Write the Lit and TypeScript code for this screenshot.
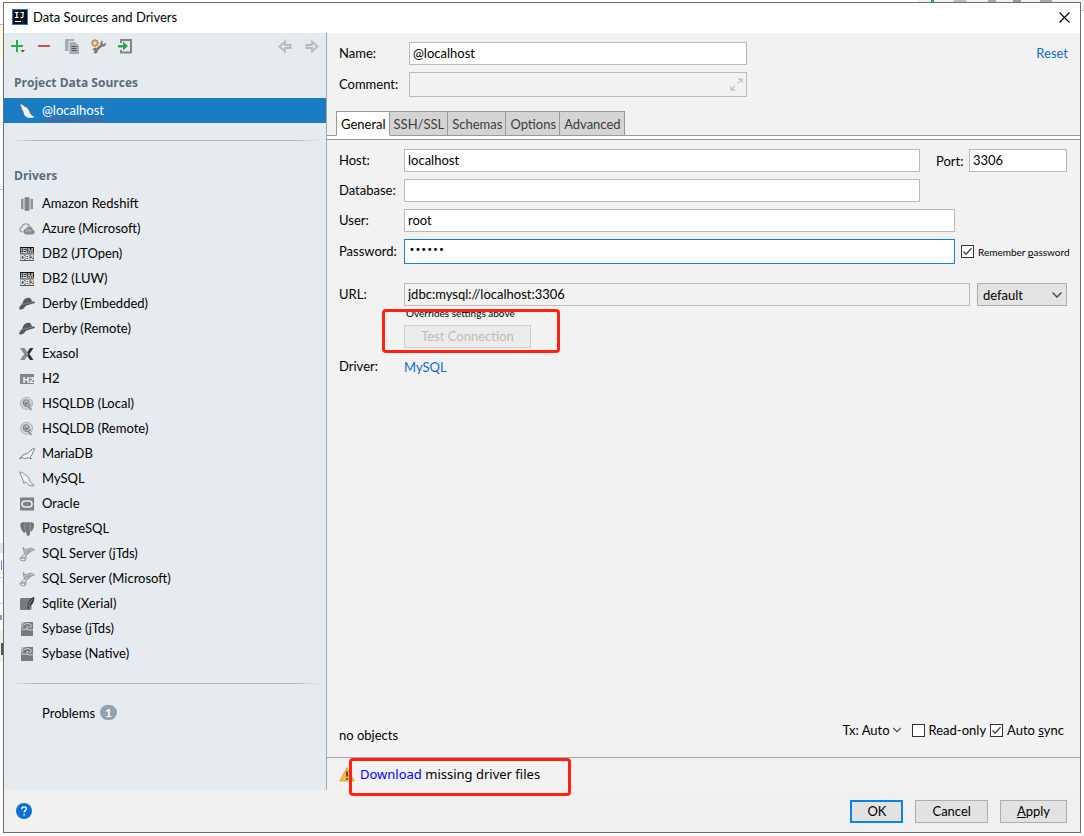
import { LitElement, html, css, svg, type TemplateResult } from "lit";
import { customElement, state } from "lit/decorators.js";
import { classMap } from "lit/directives/class-map.js";

type Glyph = TemplateResult;

const icon = (body: Glyph, size = 16) =>
  html`<svg width=${size} height=${size} viewBox="0 0 16 16" aria-hidden="true">${body}</svg>`;

const chevron = svg`<path d="M3.500 5.500 8 10l4.500-4.500" fill="none" stroke="#444" stroke-width="1.300"/>`;

const derby = svg`
  <path d="M3.200 8.200C4 4.800 5.500 2.300 8.600 1.800c2.600-.3 4 1 4.300 3.700l3.100.3c.2 1.200-1 1.700-3 2L7 9.800 4.600 12.500C3.200 13.700 1 14 .3 13.100-.3 12 1.200 9.200 3.200 8.200z" fill="#5a5a5a"/>
  <path d="M3.800 8.400 12.800 6.300" stroke="#8a8a8a" stroke-width=".8"/>`;
const db2 = svg`
  <rect x="1" y="1" width="14" height="6.500" fill="#111"/>
  <text x="8" y="6.700" text-anchor="middle" font-size="7" font-weight="700" fill="#fff" font-family="Liberation Sans">IBM</text>
  <path d="M1 3.200h14M1 5.200h14" stroke="#111" stroke-width=".5"/>
  <rect x="1" y="8.500" width="14" height="6.500" fill="#555"/>
  <text x="8" y="14.300" text-anchor="middle" font-size="7" font-weight="700" fill="#fff" font-family="Liberation Sans">DB2</text>`;
const hsql = svg`
  <circle cx="7.500" cy="7.300" r="6" fill="#d2d5d7" stroke="#b0b3b5" stroke-width="1"/>
  <path d="M8 7.500a1 1 0 1 0-1.300.8c2 .5 3.500-1 3-2.800-.7-1.900-3.400-2.200-4.700-.6-1.400 1.900-.4 4.900 2.200 5.400 2.300.4 3.800-.6 4.500-2.300M9 10l3.500 4" fill="none" stroke="#858585" stroke-width="1.400"/>`;
const sqlServer = svg`
  <path d="M4 1.500c1 .3 2 1.400 2.200 2.700l5-1.900c1.500-.2 3.200.5 4.300 1.800-1.800.2-3.200.8-4.500 2.200L7.400 9.200 5.600 8z" fill="#c9cccd" stroke="#8b8b8b" stroke-width=".9"/>
  <path d="M6.300 4.300 9 7.500M9 3.300l1.500 3.500M6.500 7l6-3" fill="none" stroke="#8b8b8b" stroke-width=".8"/>
  <path d="M5.600 7.500C4.500 9.500 2 10.500.8 13.200c1 1.500 3.500 2 5.400 1.400 1-1.800.8-3.300.6-5.400M1.500 12.500l4.800-1.200M3 10.500l3.500 3.300" fill="none" stroke="#8f8f8f" stroke-width="1"/>`;
const sybase = svg`
  <rect x="2" y="1" width="12" height="14" fill="#7a7a7a"/>
  <path d="M2 1h5C4.500 2 2.800 3.500 2 6.500z" fill="#c3c7ca"/>
  <path d="M2.500 7C3.500 4 6.500 2.300 9.500 2.600c2.300.3 3.400 1.900 2.700 3.200-.6 1-2.100.9-2.400-.2M2.500 8.200H8M8.200 5v3.200c1.500 1 3.800 1 5.600.3" fill="none" stroke="#dfe4e8" stroke-width=".9"/>`;

const glyphs: Record<string, Glyph> = {
  redshift: svg`
    <path d="M2 3.300 4.500 2.500v11L2 12.700zM14 3.300l-2.500-.8v11l2.500-.8z" fill="#929292"/>
    <path d="M5.500 1.500 8 1l2.500.5v13L8 15l-2.500-.5z" fill="#858585"/>`,
  azure: svg`
    <path d="M3.500 10.800C1.500 10.800.8 9.500.8 8.300.8 6.900 1.900 6 3.200 6 3.500 3.900 5 2.800 7 2.800c1.700 0 2.900.9 3.400 2.300" fill="none" stroke="#9b9b9b" stroke-width="1.300"/>
    <path d="M7.500 13.500C5.500 13.500 4.300 12 4.300 10.500S5.600 7.700 7.200 7.700c.6-1.600 2-2.500 3.600-2.300 1.900.2 3 1.600 3 3.400 1.300.3 2 1.200 2 2.300 0 1.400-1 2.400-2.600 2.400z" fill="#8f8f8f"/>
    <path d="M7 10.500a3 3 0 0 1 5 0" fill="none" stroke="#c4c7c9"/>`,
  db2,
  derby,
  exasol: svg`
    <path d="M1 2h4.500l4 6-4 6H1l4.300-6z" fill="#8a8a8a"/>
    <path d="M14.500 2H11L8.200 6.200l1.300 1.900-1.300 1.800L11 14h3.500l-4-6z" fill="#333"/>`,
  h2: svg`
    <rect x="1" y="3" width="14" height="10" fill="#858585"/>
    <text x="9.500" y="11.500" text-anchor="middle" font-size="9" font-weight="700" fill="#fff" font-family="Liberation Sans">H2</text>`,
  hsql,
  mariadb: svg`
    <path d="M.5 12.500c1.500-.5 2-2.300 3.500-3.500 1.800-1.200 4.500-1 5.800-2.600 1.200-1.300 2.200-3 5.700-4.100-.2 2.300-1.100 3-1.800 4.600-.6 1.500-1 3-2.600 4.200.3.700 1 .9 1.400 1.400-1.600.2-2.800-.3-3.600-.8-1 .5-2.500.2-3.600 1.200-.8-.6-.6-1-1.500-1.200z" fill="#f2f4f5" stroke="#6f6f6f" stroke-width=".9"/>`,
  mysql: svg`
    <path d="M1 1c1.700-.2 3.500 1 4.500 2.500 2.500.8 4.200 2.800 5 5.600.4 1.700 1 3 4.700 4.800-1.200.1-2.200 0-3.200-.4-.8-1.800-2.400-2-4.400-3.600-.5 1-.4 2.300-1.700 2.800C4.500 11.500 4.700 9 3 6.700 2.200 5 2 3 1 1z" fill="#f2f4f5"/>
    <path d="M15 15c-2.500-.3-5 .3-7-2.500-.8-1-1.200-1.500-1.800-2-.5.800-.5 1.700-1.200 2.200-1-1.700-.6-3.500-2-6C1.800 5 1.900 3 .8 1.200c2-.4 3.700.8 4.700 2.300 2.500.8 4.200 2.800 5 5.600.4 1.700 1.500 3.400 5 5" fill="none" stroke="#808080" stroke-width=".9"/>`,
  oracle: svg`
    <rect x="1" y="1.500" width="14" height="13" fill="#808080"/>
    <rect x="3" y="5" width="10" height="6" rx="3" fill="none" stroke="#eef1f3" stroke-width="1.500"/>`,
  postgres: svg`
    <path d="M2 2C4 .5 6 .8 7 1.500c1.500-.8 3-.8 4 0 2.500-.9 4.700.5 4 3.700-.4 2-1.400 4.300-2.600 5.300l-1.200-.5c-.3 2 .2 4-1.400 4.800-1.500.5-2.300-.5-2.400-2.200L7 10.500C6.300 11.700 5 12.500 4 11 2.500 8.700 0 4.500 2 2z" fill="#757575"/>
    <path d="M6 2.500c-1 2.300-.8 4.500.8 7.500M10.500 2.500c1.300 2 1.200 4.500.3 7.500M7.500 5.500h.9M9.500 5.500h.8" fill="none" stroke="#a5a8aa" stroke-width=".7"/>`,
  sqlServer,
  sqlite: svg`
    <path d="M2.500 2h9.800C9 5 8.800 8 8.500 14H2.500C1.500 14 1 13.500 1 12.500v-9C1 2.500 1.500 2 2.500 2z" fill="#7b7b7b"/>
    <path d="M9 8h3.500v4.500c0 1-.5 1.500-1.500 1.500H8z" fill="#7b7b7b"/>
    <path d="M15.300 1c.3 3-.8 7.500-5 9.500L9.500 13H8.300c.3-6 1.300-11 7-12z" fill="#3c3c3c"/>
    <path d="M13.500 3.500C11.500 5.500 10.200 8 9.700 10.500" fill="none" stroke="#b5b5b5" stroke-width=".7"/>`,
  sybase,
};

const drivers: [string, string][] = [
  ["redshift", "Amazon Redshift"],
  ["azure", "Azure (Microsoft)"],
  ["db2", "DB2 (JTOpen)"],
  ["db2", "DB2 (LUW)"],
  ["derby", "Derby (Embedded)"],
  ["derby", "Derby (Remote)"],
  ["exasol", "Exasol"],
  ["h2", "H2"],
  ["hsql", "HSQLDB (Local)"],
  ["hsql", "HSQLDB (Remote)"],
  ["mariadb", "MariaDB"],
  ["mysql", "MySQL"],
  ["oracle", "Oracle"],
  ["postgres", "PostgreSQL"],
  ["sqlServer", "SQL Server (jTds)"],
  ["sqlServer", "SQL Server (Microsoft)"],
  ["sqlite", "Sqlite (Xerial)"],
  ["sybase", "Sybase (jTds)"],
  ["sybase", "Sybase (Native)"],
];

const shared = css`
  * { box-sizing: border-box; }
  svg { display: block; flex: none; }
  button, input, select { font: inherit; color: inherit; margin: 0; border-radius: 0; outline: none; }
  a { color: #0f6dc4; text-decoration: none; }
`;

@customElement("source-sidebar")
export class SourceSidebar extends LitElement {
  static styles = [
    shared,
    css`
      :host { display: block; background: #e6ebef; border-right: 1px solid #a6a6a6; }
      .toolbar { display: flex; align-items: center; height: 28px; padding: 0 6px; gap: 11px; }
      .tool { display: block; padding: 0; border: 0; background: none; }
      .spring { flex: 1; }
      .heading { margin: 0; padding: 0 10px; font-family: "Open Sans", sans-serif; font-size: 12px; font-weight: 700; line-height: 20px; color: #5c6b7a; }
      .heading.first { padding-top: 12px; }
      .list { list-style: none; margin: 5px 0 0; padding: 0; }
      .row { display: flex; align-items: center; gap: 7px; height: 25px; padding-left: 15px; color: #000; }
      .row span { padding-bottom: 2px; }
      .row.selected { background: #1a7dc4; color: #fff; }
      .misspelt { text-decoration: underline wavy #c8324a 1px; text-underline-offset: 2px; }
      .rule { height: 1px; margin: 17px 6px 0; background: linear-gradient(90deg, transparent, #b2b4b6 8%, #b2b4b6 92%, transparent); }
      .drivers { margin-top: 25px; }
      .problems { display: flex; align-items: center; gap: 5px; height: 25px; margin-top: 16px; padding-left: 38px; }
      .badge { width: 17px; height: 15px; border-radius: 8px; background: #94a2b0; color: #fff; font-size: 12px; font-weight: 700; line-height: 15px; text-align: center; }
    `,
  ];

  render() {
    return html`
      <div class="toolbar" role="toolbar">
        <button class="tool" aria-label="Add">
          ${icon(svg`<path d="M7 1v12M1 7h12" stroke="#2fa84f" stroke-width="2"/><path d="M10.500 11H15L12.800 13.500z" fill="#555"/>`)}
        </button>
        <button class="tool" aria-label="Remove">
          ${icon(svg`<path d="M1 7h12" stroke="#c75450" stroke-width="2"/>`)}
        </button>
        <button class="tool" aria-label="Duplicate">
          ${icon(svg`<path d="M1 0h9v2H4.500v10H1z" fill="#a2adb5"/><path d="M5.500 3H11l4 3.500V15H5.500z" fill="#a2adb5"/><path d="M7.500 7.500h5M7.500 9.500h5M7.500 11.500h5" stroke="#53585c"/>`)}
        </button>
        <button class="tool" aria-label="Settings">
          ${icon(svg`<circle cx="4" cy="4" r="2.600" fill="none" stroke="#d09a55" stroke-width="2"/><path d="M4 0v1M4 7v1.200M0 4h1M7 4h1.200M1.200 1.200l.8.800M6 6l.8.800M6.800 1.200 6 2M1.200 6.800 2 6" stroke="#d09a55" stroke-width="1.500"/><path d="M3.500 12.500 11.500 5.500" stroke="#7b7f82" stroke-width="2.600"/><path d="M15 3.500c.3 3-1.300 4.300-3.300 4.200S8.800 5.500 9.500 3.500c.4-1 1.200-1.800 2.500-1.900L11.300 4l1.200 1.200z" fill="#7b7f82"/><path d="M5.700 9.500a2.800 2.800 0 0 0-4.500 1.500l1.700-.3.900 1.500-1.400 1.600a2.800 2.800 0 0 0 4.600-2z" fill="#7b7f82"/>`)}
        </button>
        <button class="tool" aria-label="Import">
          ${icon(svg`<path d="M3 4V1h10v12.500H3V11" fill="none" stroke="#848484" stroke-width="2"/><path d="M0 6h5V2.500l5 4.500-5 4.500V8.500H0z" fill="#2fa84f"/>`)}
        </button>
        <span class="spring"></span>
        <button class="tool" aria-label="Back">
          ${icon(svg`<path d="M2.500 7.500 8 2.500V6h5.500v3H8v3.500z" fill="none" stroke="#b7babc" stroke-width="1.800"/>`)}
        </button>
        <button class="tool" aria-label="Forward">
          ${icon(svg`<path d="M13.500 7.500 8 2.500V6H2.500v3H8v3.500z" fill="none" stroke="#b7babc" stroke-width="1.800"/>`)}
        </button>
      </div>
      <h2 class="heading first">Project Data Sources</h2>
      <ul class="list">
        <li class="row selected">
          ${icon(svg`<path d="M1 1c1.700-.2 3.500 1 4.500 2.500 2.500.8 4.200 2.800 5 5.600.4 1.700 2 3 5 5.200-3 .8-5 .9-7 .3C5 13.500 4.700 9 3 6.700 2.200 5 2 3 1 1z" fill="#f4f4f4"/><path d="M4.500 11C4.400 9 3.800 8 3 6.700 2.200 5 2 3 .8 1.200c2-.4 3.700.8 4.700 2.300" fill="none" stroke="#777" stroke-width=".9"/>`)}
          <span class="misspelt">@localhost</span>
        </li>
      </ul>
      <div class="rule"></div>
      <h2 class="heading drivers">Drivers</h2>
      <ul class="list">
        ${drivers.map(([key, name]) => html`<li class="row">${icon(glyphs[key])}<span>${name}</span></li>`)}
      </ul>
      <div class="rule"></div>
      <div class="problems"><span>Problems</span><span class="badge">1</span></div>
    `;
  }
}

@customElement("source-form")
export class SourceForm extends LitElement {
  @state() private tab = "General";

  static styles = [
    shared,
    css`
      :host { display: flex; flex-direction: column; min-width: 0; background: #f2f2f2; }
      .field { height: 23px; min-width: 0; padding: 0 3px 1px; border: 1px solid #bababa; background: #fff; }
      .grow { flex: 1; }
      .tall { height: 25px; }
      .plain { background: #f2f2f2; }
      .focused { border-color: #1481d6; }
      .secret { padding: 0 4px 4px; font-family: "DejaVu Sans", sans-serif; font-size: 10px; }
      .line { display: flex; align-items: center; }
      .head { display: grid; grid-template-columns: 70px 338px 1fr; row-gap: 7px; align-items: center; padding: 9px 12px 14px; }
      .head > label, .head > a, .label { padding-bottom: 1px; }
      .reset { justify-self: end; }
      .comment { position: relative; display: grid; }
      .expand { position: absolute; right: 4px; top: 6px; }
      .tabs { display: flex; padding-left: 9px; height: 25px; box-shadow: inset 0 -1px #999; }
      .tab { padding: 0 3px 0 4px; border: 1px solid #999; border-left-width: 0; background: #d4d4d4; color: #3c3c3c; }
      .tab:first-child { border-left-width: 1px; }
      .tab.active { background: #fff; border-bottom-color: #fff; color: #000; }
      .band { height: 4px; background: #fff; border-bottom: 1px solid #999; }
      .panel { display: flex; flex-direction: column; gap: 7px; padding: 9px 13px 0 12px; }
      .label { flex: none; width: 65px; }
      .side { flex: none; display: flex; align-items: center; }
      .wide { width: 147px; padding-left: 16px; }
      .narrow { width: 112px; padding-left: 6px; }
      .port { flex: none; width: 98px; margin-left: auto; }
      .box { appearance: none; flex: none; width: 13px; height: 13px; border: 1px solid #333; background: #fff; }
      .tick { position: relative; display: grid; }
      .tick svg { position: absolute; inset: 0; pointer-events: none; }
      .check { display: flex; align-items: center; gap: 4px; white-space: nowrap; }
      .small { font-size: 10px; }
      .url { margin-top: 12px; }
      .pick { position: relative; display: grid; width: 90px; margin-left: 7px; }
      .select { appearance: none; height: 23px; padding: 0 5px; border: 1px solid #adadad; background: #e3e3e3; }
      .pick svg { position: absolute; right: 2px; top: 4px; pointer-events: none; }
      .testing { position: relative; margin: -7px 0 0 65px; }
      .hint { height: 19px; padding-left: 2px; font-size: 10px; line-height: 15px; }
      .test { display: block; width: 127px; height: 23px; padding: 0 0 2px; border: 1px solid #cfcfcf; background: #ebebeb; color: #bdbdbd; }
      .mark { position: absolute; border: 3px solid #ff2213; border-radius: 4px; pointer-events: none; z-index: 1; }
      .mark.test-mark { left: -22px; top: 3px; width: 178px; height: 44px; }
      .driver { height: 23px; }
      .summary { display: flex; justify-content: space-between; align-items: flex-start; margin-top: auto; padding: 0 16px 0 12px; height: 37px; }
      .objects { line-height: 30px; }
      .options { display: flex; align-items: center; gap: 4px; height: 20px; }
      .tx { display: flex; align-items: center; padding: 0; border: 0; background: none; margin-right: 4px; }
      .status { position: relative; display: flex; align-items: center; gap: 5px; height: 33px; padding-left: 12px; border-top: 1px solid #a6a6a6; font-family: "Noto Sans", sans-serif; }
      .download { color: #0000ff; }
      .mark.status-mark { left: 22px; top: 0; width: 222px; height: 38px; }
    `,
  ];

  private check(id: string, text: TemplateResult, on: boolean, small = false) {
    return html`<span class=${classMap({ check: true, small })}>
      <span class="tick">
        <input class="box" id=${id} type="checkbox" .checked=${on} />
        ${on ? html`<svg width="13" height="13" viewBox="0 0 13 13"><path d="M2.500 6.500 5 9.200l5.500-6" fill="none" stroke="#444" stroke-width="1.300"/></svg>` : ""}
      </span>
      <label for=${id}>${text}</label>
    </span>`;
  }

  render() {
    const tabs = ["General", "SSH/SSL", "Schemas", "Options", "Advanced"];
    return html`
      <div class="head">
        <label for="name">Name:</label>
        <input class="field" id="name" .value=${"@localhost"} />
        <a class="reset" href="#">Reset</a>
        <label for="comment">Comment:</label>
        <span class="comment">
          <input class="field tall plain" id="comment" />
          <svg class="expand" width="13" height="13" viewBox="0 0 13 13"><path d="M8 1h4v4M12 1 7.800 5.200M5 12H1V8M1 12l4.200-4.200" fill="none" stroke="#b0b0b0"/></svg>
        </span>
      </div>
      <div class="tabs" role="tablist">
        ${tabs.map(
          (t) => html`<button role="tab" aria-selected=${t === this.tab} class=${classMap({ tab: true, active: t === this.tab })} @click=${() => (this.tab = t)}>${t}</button>`,
        )}
      </div>
      <div class="band"></div>
      <div class="panel">
        <div class="line">
          <label class="label" for="host">Host:</label>
          <input class="field grow" id="host" .value=${"localhost"} />
          <span class="side wide"><label for="port">Port:</label><input class="field port" id="port" .value=${"3306"} /></span>
        </div>
        <div class="line">
          <label class="label" for="database">Database:</label>
          <input class="field grow" id="database" />
          <span class="side wide"></span>
        </div>
        <div class="line">
          <label class="label" for="user">User:</label>
          <input class="field grow" id="user" .value=${"root"} />
          <span class="side narrow"></span>
        </div>
        <div class="line">
          <label class="label" for="password">Password:</label>
          <input class="field grow tall focused secret" id="password" type="password" .value=${"secret"} />
          <span class="side narrow">${this.check("remember", html`Remember <u>p</u>assword`, true, true)}</span>
        </div>
        <div class="line url">
          <label class="label" for="url">URL:</label>
          <input class="field grow plain" id="url" .value=${"jdbc:mysql://localhost:3306"} />
          <span class="pick">
            <select class="select" aria-label="URL type"><option>default</option></select>
            ${icon(chevron)}
          </span>
        </div>
        <div class="testing">
          <div class="hint">Overrides settings above</div>
          <button class="test" disabled>Test Connection</button>
          <div class="mark test-mark"></div>
        </div>
        <div class="line driver"><span class="label">Driver:</span><a href="#">MySQL</a></div>
      </div>
      <div class="summary">
        <span class="objects">no objects</span>
        <div class="options">
          <button class="tx">Tx: Auto${icon(chevron, 14)}</button>
          ${this.check("readonly", html`Read-only`, false)}
          ${this.check("sync", html`Auto <u>s</u>ync`, true)}
        </div>
      </div>
      <div class="status">
        ${icon(svg`<path d="M8 1.500 15.300 15H.7z" fill="#f0b848" stroke="#d99c2b" stroke-width=".8"/><path d="M8 5.500v5M8 12v1.800" stroke="#444" stroke-width="1.800"/>`)}
        <span><a class="download" href="#">Download</a> missing driver files</span>
        <div class="mark status-mark"></div>
      </div>
    `;
  }
}

@customElement("app-root")
export class AppRoot extends LitElement {
  static styles = [
    shared,
    css`
      :host {
        display: grid;
        min-height: 100vh;
        box-sizing: border-box;
        padding: 2px 3px 3px;
        font: 13px/20px Lato, sans-serif;
        color: #000;
        background:
          linear-gradient(#fffbe0, #fffbe0) 0 25px / 3px 33px no-repeat,
          linear-gradient(#bbb, #bbb) 0 24px / 3px 1px no-repeat,
          linear-gradient(#bbb, #bbb) 0 189px / 3px 1px no-repeat,
          linear-gradient(#e4e4e4, #e4e4e4) 0 543px / 3px 10px no-repeat,
          linear-gradient(#4a90d0, #4a90d0) 1px 561px / 1px 9px no-repeat,
          linear-gradient(#ccc, #ccc) 0 577px / 3px 1px no-repeat,
          linear-gradient(#ccc, #ccc) 0 603px / 3px 1px no-repeat,
          linear-gradient(#999, #999) 0 615px / 2px 5px no-repeat,
          linear-gradient(#555, #555) 1px 643px / 2px 12px no-repeat,
          linear-gradient(#e8f5e6, #e8f5e6) 0 630px / 3px 32px no-repeat,
          linear-gradient(#ccc, #ccc) 100% 10px / 3px 1px no-repeat,
          linear-gradient(#2fa84f, #2fa84f) 931px 0 / 3px 2px no-repeat,
          linear-gradient(#bbb, #bbb) 954px 0 / 12px 2px no-repeat,
          linear-gradient(#aaa, #aaa) 988px 0 / 8px 2px no-repeat,
          linear-gradient(#999, #999) 1013px 0 / 8px 2px no-repeat,
          linear-gradient(#aaa, #aaa) 1040px 0 / 12px 2px no-repeat,
          linear-gradient(#f0f0f0, #f0f0f0) 100% 0 / 166px 10px no-repeat,
          #fff;
      }
      .window { display: flex; flex-direction: column; border: 1px solid #6e6e6e; background: #f0f0f0; }
      .title { display: flex; align-items: center; gap: 5px; height: 30px; padding: 0 10px 2px 8px; background: #fff; }
      .name { margin: 0; flex: 1; font-size: 13px; font-weight: 400; }
      .close, .help { padding: 0; border: 0; background: none; }
      .body { flex: 1; display: grid; grid-template-columns: 323px minmax(0, 1fr); }
      .actions { display: flex; align-items: center; gap: 12px; height: 42px; padding: 0 13px 0 12px; }
      .help { display: grid; place-items: center start; width: 26px; height: 25px; margin-right: auto; background: #f2f2f2; }
      .button { height: 23px; padding: 0 16px; border: 1px solid #adadad; background: #e2e2e2; line-height: 20px; }
      .button.primary { border: 2px solid #0a84e0; padding: 0 15px; line-height: 18px; }
    `,
  ];

  render() {
    return html`
      <div class="window" role="dialog" aria-labelledby="title">
        <div class="title">
          ${icon(svg`<rect width="16" height="16" fill="#1b74e0"/><rect x="1" y="1" width="14" height="14" fill="#111"/><path d="M3 3.500h3.500M4.800 3.500v5M3 8.500h3.500M8.500 3.500H12M11 3.500v4c0 1-1 1.300-2.500.900M3 12.500h6" fill="none" stroke="#fff" stroke-width="1.200"/>`)}
          <h1 class="name" id="title">Data Sources and Drivers</h1>
          <button class="close" aria-label="Close">
            <svg width="11" height="11" viewBox="0 0 11 11"><path d="M.5.500l10 10M10.500.500l-10 10" stroke="#000" stroke-width="1.100"/></svg>
          </button>
        </div>
        <div class="body">
          <source-sidebar></source-sidebar>
          <source-form></source-form>
        </div>
        <div class="actions">
          <button class="help" aria-label="Help">
            ${icon(svg`<circle cx="8" cy="8" r="8" fill="#0a6fd6"/><path d="M5.700 6.200c0-3.200 4.800-3 4.600-.2-.1 1.600-2.200 1.700-2.200 3.600M8.100 11v1.600" fill="none" stroke="#fff" stroke-width="1.400"/>`)}
          </button>
          <button class="button primary">OK</button>
          <button class="button">Cancel</button>
          <button class="button"><u>A</u>pply</button>
        </div>
      </div>
    `;
  }
}
